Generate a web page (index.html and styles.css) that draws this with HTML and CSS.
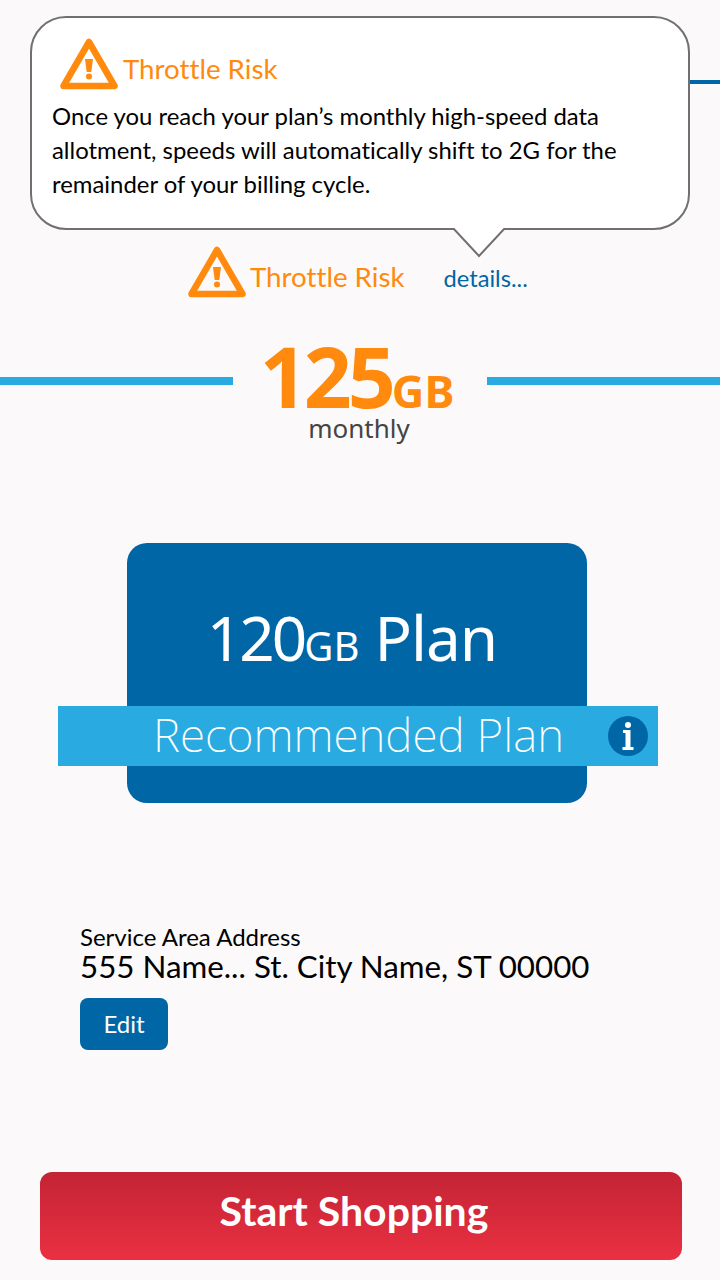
FILE: index.html
```html
<!DOCTYPE html>
<html lang="en">
  <head>
    <meta charset="UTF-8" />
    <meta name="viewport" content="width=device-width, initial-scale=1.0" />
    <title>Start Shopping</title>
    <link rel="stylesheet" href="styles.css">
  </head>
  <body>
    <div class="page">
      <!-- tooltip opened from "details..." -->
      <div class="tooltip">
        <div class="risk-title">
          <svg class="warn-icon" viewBox="0 0 58 52">
            <path d="M29 4 L54.500 48 L3.500 48 Z" fill="none" stroke="#ff8a0d" stroke-width="6.500" stroke-linejoin="round" />
            <path d="M25 21 H33 L31.300 34 H26.700 Z" fill="#ff8a0d" />
            <circle cx="29" cy="38.500" r="3" fill="#ff8a0d" />
          </svg>
          <span>Throttle Risk</span>
        </div>
        <p class="tooltip-text">Once you reach your plan’s monthly high-speed data allotment, speeds will automatically shift to 2G for the remainder of your billing cycle.</p>
        <svg class="tooltip-arrow" viewBox="0 0 56 30">
          <path d="M2 0 L28 28 L54 0" fill="#fff" stroke="#707070" stroke-width="2" />
        </svg>
      </div>

      <div class="top-line"></div>

      <div class="risk-row">
        <div class="risk-title">
          <svg class="warn-icon" viewBox="0 0 58 52">
            <path d="M29 4 L54.500 48 L3.500 48 Z" fill="none" stroke="#ff8a0d" stroke-width="6.500" stroke-linejoin="round" />
            <path d="M25 21 H33 L31.300 34 H26.700 Z" fill="#ff8a0d" />
            <circle cx="29" cy="38.500" r="3" fill="#ff8a0d" />
          </svg>
          <span>Throttle Risk</span>
        </div>
        <a class="details" href="#">details...</a>
      </div>

      <div class="usage">
        <div class="usage-rule"></div>
        <div class="usage-amount">125<span class="usage-unit">GB</span></div>
        <div class="usage-rule"></div>
      </div>
      <div class="usage-label">monthly</div>

      <div class="plan">
        <div class="plan-name"><span class="plan-size">120</span><span class="plan-unit">GB</span> Plan</div>
        <div class="plan-band">
          <span class="plan-band-text">Recommended Plan</span>
          <svg class="info-icon" viewBox="0 0 40 40">
            <circle cx="20" cy="20" r="20" fill="#0066a6" />
            <circle cx="20" cy="9" r="3" fill="#fff" />
            <path d="M15 14 H22.500 V31 H25.500 V34 H14.500 V31 H17.500 V17 H15 Z" fill="#fff" />
          </svg>
        </div>
      </div>

      <div class="address">
        <div class="address-label">Service Area Address</div>
        <div class="address-value">555 Name... St. City Name, ST 00000</div>
        <button class="edit-btn">Edit</button>
      </div>

      <button class="shop-btn">Start Shopping</button>
    </div>
  </body>
</html>
```

FILE: styles.css
```css
* {
  box-sizing: border-box;
}

body {
  margin: 0;
  background-color: #fbf9fa;
  font-family: "Lato", "Noto Sans", sans-serif;
  font-variant-ligatures: none;
}

.page {
  position: relative;
  width: 720px;
  height: 1280px;
  overflow: hidden;
}

.tooltip {
  position: absolute;
  top: 16px;
  left: 30px;
  width: 660px;
  height: 214px;
  padding: 20px 20px 0;
  background-color: #fff;
  border: 2px solid #707070;
  border-radius: 36px;
}

.tooltip .risk-title {
  margin-left: 8px;
  gap: 5px;
}

.tooltip .risk-title span {
  margin-bottom: 2px;
}

.tooltip-text {
  margin: 9px 0 0;
  font-size: 23.900px;
  line-height: 34px;
  color: #000;
}

.tooltip-arrow {
  position: absolute;
  top: 210px;
  left: 419px;
  width: 56px;
  height: 30px;
}

.top-line {
  width: 30px;
  height: 4px;
  margin: 80px 0 0 auto;
  background-color: #0066a6;
}

.risk-row {
  display: flex;
  align-items: center;
  margin: 162px 0 0 188px;
}

.risk-title {
  display: flex;
  align-items: flex-end;
  gap: 4px;
  font-size: 27.700px;
  color: #ff8a0d;
}

.risk-title span {
  line-height: 38px;
  margin-bottom: 2px;
}

.warn-icon {
  width: 58px;
  height: 52px;
  flex-shrink: 0;
}

.details {
  margin: 12px 0 0 39px;
  font-size: 23.700px;
  color: #0066a6;
  text-decoration: none;
}

.usage {
  display: flex;
  align-items: flex-start;
  margin-top: 40px;
}

.usage-rule {
  flex: 1;
  height: 8px;
  margin-top: 39px;
  background-color: #29abe2;
}

.usage-amount {
  width: 254px;
  height: 76px;
  padding-right: 6px;
  text-align: center;
  font-family: "Noto Sans", sans-serif;
  font-size: 84px;
  line-height: 76px;
  font-weight: 700;
  letter-spacing: -4px;
  color: #ff8a0d;
}

.usage-unit {
  font-size: 45px;
  letter-spacing: 0;
}

.usage-label {
  padding-right: 2px;
  text-align: center;
  font-family: "Noto Sans", sans-serif;
  font-size: 26px;
  line-height: 28px;
  color: #444;
}

.plan {
  position: relative;
  width: 460px;
  height: 260px;
  margin: 101px 0 0 127px;
  padding-top: 163px;
  background-color: #0066a6;
  border-radius: 20px;
}

.plan-name {
  position: absolute;
  top: 56px;
  left: 0;
  width: 450px;
  text-align: center;
  font-family: "Noto Sans", sans-serif;
  font-size: 62px;
  line-height: 76px;
  letter-spacing: -1px;
  color: #fff;
}

.plan-size {
  letter-spacing: -3px;
}

.plan-unit {
  font-size: 40px;
  letter-spacing: 0;
}

.plan-band {
  display: flex;
  align-items: center;
  justify-content: flex-end;
  width: 600px;
  height: 60px;
  margin-left: -69px;
  padding-right: 10px;
  background-color: #29abe2;
}

.plan-band-text {
  margin: 0 44px 4px 0;
  font-family: "Noto Sans", sans-serif;
  font-size: 46px;
  font-weight: 200;
  color: #fff;
}

.info-icon {
  width: 40px;
  height: 40px;
}

.address {
  margin: 121px 0 0 80px;
}

.address-label {
  font-size: 24px;
  line-height: 25px;
  color: #000;
}

.address-value {
  font-size: 31.300px;
  line-height: 34px;
  color: #000;
}

.edit-btn {
  display: block;
  width: 88px;
  height: 52px;
  margin-top: 15px;
  padding: 0 0 2px;
  border: 0;
  border-radius: 8px;
  background-color: #0066a6;
  font-family: inherit;
  font-size: 24px;
  color: #fff;
}

.shop-btn {
  display: block;
  width: 642px;
  height: 88px;
  margin: 122px 0 0 40px;
  padding: 0 14px 12px 0;
  border: 0;
  border-radius: 12px;
  background: linear-gradient(#c32434, #ea3042);
  font-family: inherit;
  font-size: 41px;
  font-weight: 700;
  color: #fff;
}
```
